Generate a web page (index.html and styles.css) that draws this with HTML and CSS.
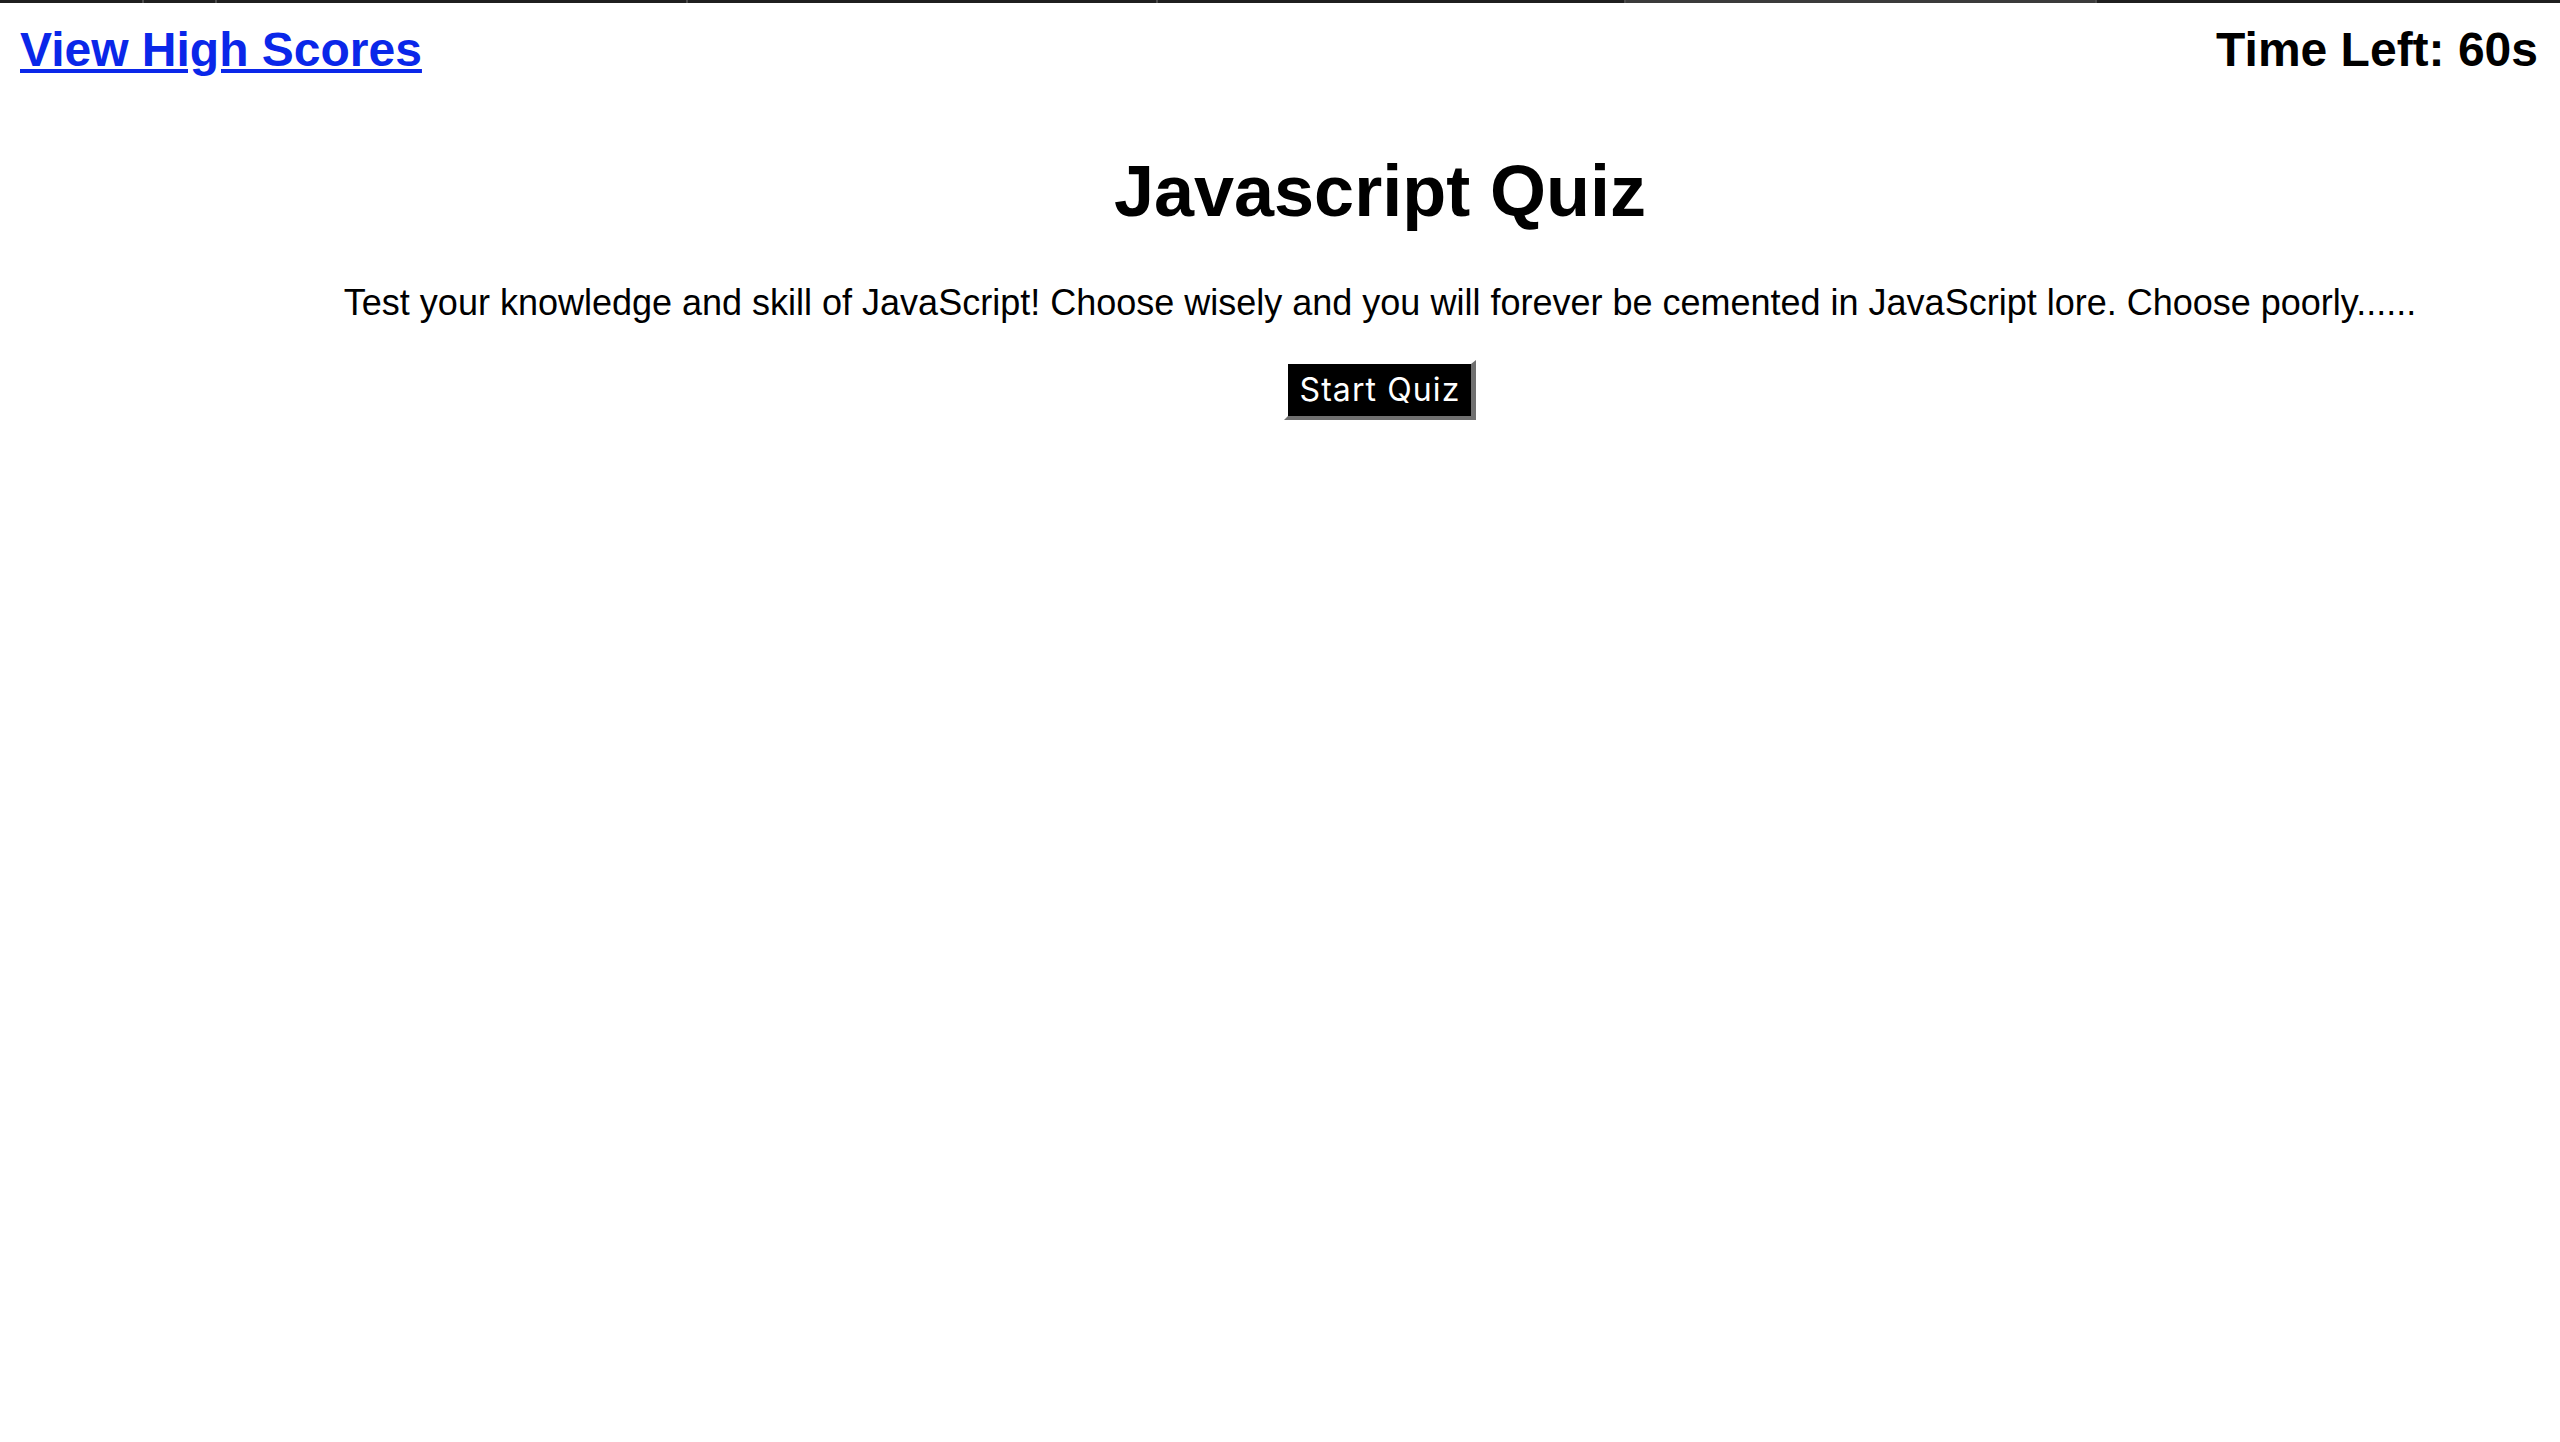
FILE: index.html
```html
<!DOCTYPE html>
<html lang="en">
<head>
<meta charset="utf-8">
<title>Javascript Quiz</title>
<link rel="stylesheet" href="styles.css">
</head>
<body>
<div class="tabstrip">
  <div class="tab t1"></div>
  <div class="tab t2"></div>
  <div class="tab t3"></div>
  <div class="tab t4"></div>
  <div class="tab t5"></div>
  <div class="tab t6 active"></div>
  <div class="tab t7"></div>
</div>
<header class="header">
  <a class="scores-link" href="#">View High Scores</a>
  <div class="timer">Time Left: 60s</div>
</header>
<main class="main">
  <h1 class="title">Javascript Quiz</h1>
  <p class="intro">Test your knowledge and skill of JavaScript! Choose wisely and you will forever be cemented in JavaScript lore. Choose poorly......</p>
  <button class="start-btn" type="button">Start Quiz</button>
</main>
</body>
</html>
```

FILE: styles.css
```css
html, body {
  margin: 0;
  padding: 0;
  background: #ffffff;
}

body {
  font-family: "Liberation Sans", Arial, sans-serif;
  color: #000000;
}

.tabstrip {
  display: flex;
  height: 3px;
  background: #1f1f1f;
}

.tab {
  height: 3px;
  background: #1f1f1f;
  border-left: 2px solid #4a4a4a;
  box-sizing: border-box;
}

.t1 { width: 142px; border-left: none; }
.t2 { width: 73px; }
.t3 { width: 471px; }
.t4 { width: 470px; }
.t5 { width: 468px; }
.t6 { width: 471px; }
.t7 { flex: 1; }
.active { background: #3b3b3b; }

.header {
  display: flex;
  justify-content: space-between;
  align-items: baseline;
  padding: 18.5px 22px 0 20px;
}

.scores-link {
  font-size: 48px;
  font-weight: bold;
  color: #0a27e9;
  text-decoration: underline;
}

.timer {
  font-size: 48px;
  font-weight: bold;
}

.main {
  padding-left: 200px;
  text-align: center;
}

.title {
  margin: 73px 0 0;
  font-size: 72px;
  font-weight: bold;
}

.intro {
  margin: 50px 0 0;
  font-size: 36px;
}

.start-btn {
  margin-top: 36px;
  font-family: Inter, "Noto Sans", sans-serif;
  font-size: 32px;
  letter-spacing: 1.1px;
  line-height: 36px;
  color: #ffffff;
  background: #000000;
  padding: 8px 11px 8px 12px;
  border-style: solid;
  border-width: 4px 5px 4px 4px;
  border-color: #ffffff #707070 #707070 #ffffff;
  cursor: pointer;
}
```
